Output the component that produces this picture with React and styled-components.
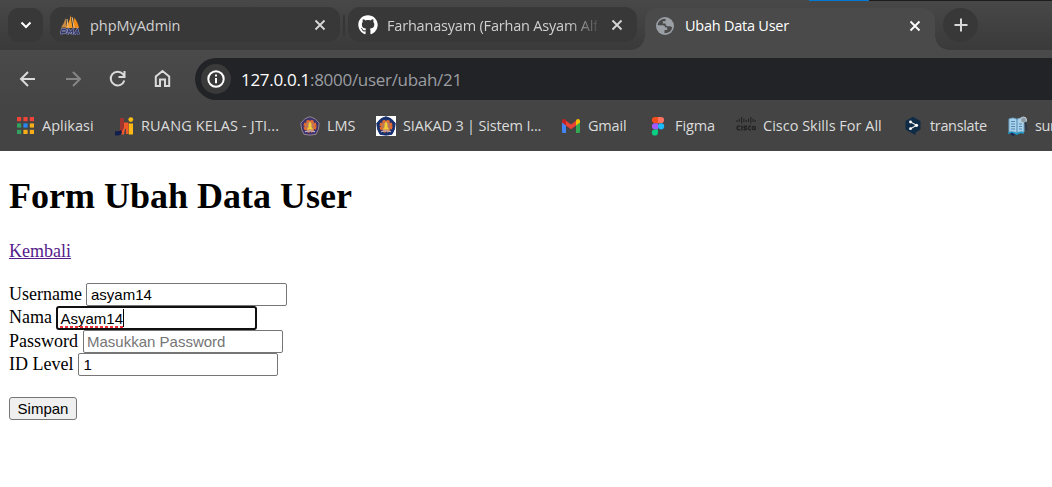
import React from "react";
import styled, { createGlobalStyle, css } from "styled-components";
import { FaGithub } from "react-icons/fa";

const Global = createGlobalStyle`
  * { box-sizing: border-box; }
  body { margin: 0; background: #fff; overflow: hidden; }
`;

const Window = styled.div`
  width: 1052px;
  height: 487px;
  overflow: hidden;
  background: #fff;
  font-family: "Open Sans", "Noto Sans", sans-serif;
`;

const TabStrip = styled.div`
  position: relative;
  display: flex;
  align-items: flex-start;
  height: 50px;
  padding: 8px 0 0 8px;
  background: linear-gradient(#484848, #3a3a3a);
`;

const Taskbar = styled.div`
  position: absolute;
  top: 0;
  right: 0;
  width: 243px;
  height: 1px;
  background: linear-gradient(90deg, #0078d4 60px, #1d1d1d 60px);
`;

const StripButton = styled.div`
  display: flex;
  align-items: center;
  justify-content: center;
  flex: none;
  width: 35px;
  height: 34px;
  border-radius: ${(p) => (p.$round ? "50%" : "11px")};
  background: #383838;
  margin-left: ${(p) => (p.$round ? "8px" : "0")};
`;

const Tab = styled.div`
  position: relative;
  display: flex;
  align-items: center;
  flex: none;
  width: ${(p) => p.$width ?? 290}px;
  height: 35px;
  margin: -1px 0 0 ${(p) => p.$gap}px;
  padding: 1px 14px 0 10px;
  border-radius: 12px;
  background: #383838;
  color: #d0d0d0;
  ${(p) =>
    p.$active &&
    css`
      height: 42px;
      margin-top: 0;
      padding-bottom: 8px;
      border-radius: 12px 12px 0 0;
      background: #4a4a4a;
      color: #fff;
      &::before,
      &::after {
        content: "";
        position: absolute;
        bottom: 0;
        width: 14px;
        height: 14px;
      }
      &::before {
        left: -14px;
        background: radial-gradient(circle at 0 0, transparent 13.5px, #4a4a4a 14px);
      }
      &::after {
        right: -14px;
        background: radial-gradient(circle at 100% 0, transparent 13.5px, #4a4a4a 14px);
      }
    `}
`;

const TabTitle = styled.span`
  flex: 1;
  margin-left: ${(p) => p.$left ?? 10}px;
  overflow: hidden;
  white-space: nowrap;
  font-size: 14.5px;
  line-height: 24px;
  padding-top: 1px;
  letter-spacing: ${(p) => p.$track ?? 0}px;
  ${(p) => p.$fade && "mask-image: linear-gradient(90deg, #000 180px, transparent 216px);"}
`;

const TabClose = styled.svg`
  flex: none;
  width: 12px;
  height: 12px;
  margin-left: 14px;
`;

const Divider = styled.div`
  flex: none;
  width: 2px;
  height: 21px;
  margin: 7px 0 0 3px;
  border-radius: 1px;
  background: #353535;
`;

const Toolbar = styled.div`
  display: flex;
  align-items: center;
  height: 58px;
  padding-left: 16px;
  background: linear-gradient(#4a4a4a, #444);
`;

const NavIcon = styled.svg`
  flex: none;
  width: 24px;
  height: 24px;
  margin-right: 21px;
  fill: none;
  stroke: ${(p) => (p.$dim ? "#858585" : "#dadada")};
  stroke-width: 2;
`;

const AddressBar = styled.div`
  display: flex;
  align-items: center;
  flex: 1;
  height: 42px;
  margin-left: -1px;
  padding-left: 6px;
  border-radius: 21px 0 0 21px;
  background: #222327;
  color: #9b9da1;
  font-size: 17px;
  letter-spacing: -0.3px;
  b { color: #fff; font-weight: 400; }
`;

const InfoBadge = styled.div`
  display: flex;
  align-items: center;
  justify-content: center;
  width: 30px;
  height: 30px;
  margin-right: 10px;
  border-radius: 50%;
  background: #3a3a3b;
`;

const Bookmarks = styled.div`
  display: flex;
  height: 43px;
  padding-left: 15px;
  background: #444;
  overflow: hidden;
`;

const Bookmark = styled.div`
  display: flex;
  align-items: center;
  flex: none;
  width: ${(p) => p.$width}px;
  height: 36px;
  color: #dcdcdc;
  font-size: 14.5px;
  letter-spacing: ${(p) => p.$track}px;
  white-space: nowrap;
  svg { flex: none; width: 20px; height: 20px; margin-right: 7px; }
`;

const BookmarkLabel = styled.span`
  padding-bottom: 1px;
`;

const Page = styled.main`
  padding: 0 9px;
  color: #000;
  font: 18px/23px "Liberation Serif", serif;
`;

const Heading = styled.h1`
  margin: 0;
  padding-top: 24px;
  font-size: 36px;
  line-height: 42px;
`;

const BackLink = styled.a`
  display: block;
  width: max-content;
  margin-top: 23px;
  color: #551a8b;
  text-decoration: underline;
`;

const Form = styled.form`
  margin-top: 20px;
`;

const Row = styled.label`
  display: flex;
  height: ${(p) => p.$height ?? 23}px;
  gap: ${(p) => p.$gap ?? 4}px;
`;

const field = css`
  width: 201px;
  height: 23px;
  margin: 0;
  padding: 0 4px;
  border: 1px solid #767676;
  border-radius: 2px;
  background: #fff;
  color: #000;
  font: 15px/21px "Liberation Sans", sans-serif;
`;

const Input = styled.input`
  ${field}
  width: ${(p) => p.$width ?? 201}px;
  padding: 0 ${(p) => p.$inset ?? 4}px;
  &::placeholder { color: #757575; opacity: 1; }
`;

const FocusedField = styled.div`
  ${field}
  height: 24px;
  padding: 1px 3px 0 2.5px;
  border: 2px solid #101010;
  border-radius: 3px;
`;

const Misspelled = styled.span`
  position: relative;
  display: block;
  width: max-content;
  height: 18px;
  line-height: 19px;
  border-right: 1px solid #000;
  &::after {
    content: "";
    position: absolute;
    left: 0;
    right: 0;
    bottom: -1px;
    height: 2px;
    background: repeating-linear-gradient(90deg, #f0303c 0 3px, transparent 3px 5px);
  }
`;

const Submit = styled.button`
  display: block;
  width: 68px;
  height: 23px;
  margin-top: 21px;
  padding: 0;
  border: 1px solid #767676;
  border-radius: 3px;
  background: #efefef;
  color: #000;
  font: 15px/21px "Liberation Sans", sans-serif;
`;

const CloseIcon = ({ color = "#d8d8d8" }) => (
  <TabClose viewBox="0 0 12 12">
    <path d="M1.5 1.5l9 9M10.5 1.5l-9 9" stroke={color} strokeWidth="1.8" />
  </TabClose>
);

const GlobeIcon = () => (
  <svg width="20" height="20" viewBox="0 0 20 20">
    <circle cx="10" cy="10" r="9" fill="#9aa0a6" />
    <path d="M10.5 2.7C6 2.5 2.8 5.6 2.7 9.2H8Q10.2 9.4 10.3 11.5H12.2V14H9.5V17.2Q16 17.3 17.2 11.5L15.5 10.2H12Q10.6 10 10.5 7.6H7.8V5.2H10.5Z" fill="#4a4a4a" />
  </svg>
);

const PmaIcon = () => (
  <svg width="20" height="20" viewBox="0 0 20 20">
    <path d="M5.5 3L7 12.5H1Q4.5 8 5.5 3Z" fill="#c98a46" />
    <path d="M10.5 0L12.5 13H5.5Q9.5 8 10.5 0Z" fill="#f59a24" />
    <path d="M14 2.5Q18 7 19 13H13Z" fill="#f08a16" />
    <path d="M7 4l1 8M12 2l2 10" stroke="#f3c583" />
    <path d="M1.3 19.5L2 14.6H5Q6.5 14.6 6.1 16.2T4.5 17.5H2M7.6 19.5L8.6 14.6L10.3 17.5L13 14.6L12.5 19.5M14.3 19.5L17.3 14.6L18.7 19.5M15.3 18H18.2" fill="none" stroke="#aaaed8" strokeWidth="2.2" />
    <path d="M1.3 19.5L2 14.6H5Q6.5 14.6 6.1 16.2T4.5 17.5H2M7.6 19.5L8.6 14.6L10.3 17.5L13 14.6L12.5 19.5M14.3 19.5L17.3 14.6L18.7 19.5M15.3 18H18.2" fill="none" stroke="#34376a" strokeWidth="1.3" />
  </svg>
);

const APP_COLORS = ["#ef4438", "#ef4438", "#ef4438", "#34a160", "#2a86f0", "#f5ad18", "#34a160", "#f5ad18", "#f5ad18"];

const AppsIcon = () => (
  <svg viewBox="0 0 20 20">
    {APP_COLORS.map((c, i) => (
      <rect key={i} x={2 + (i % 3) * 6.4} y={1 + Math.floor(i / 3) * 6.4} width="4.2" height="4.2" fill={c} />
    ))}
  </svg>
);

const JtiIcon = () => (
  <svg viewBox="0 0 20 20">
    <path d="M6 2H10V14Q10 18 6 18H5V14H6Z" fill="#9e3430" />
    <path d="M1 15Q4 16 7 14L8 17Q6 20 3 19.5H1Z" fill="#12204c" />
    <path d="M10 6.5H14.5V18H12V12.5Q10.5 13 10 18.5H7.5Q8.3 14 10 11.5Z" fill="#f05a28" />
    <circle cx="16.8" cy="3.6" r="2.4" fill="#fdbe10" />
    <path d="M14.8 7.5H19V18.5H14.8Z" fill="#fdb813" />
  </svg>
);

const CampusIcon = ({ boxed }) => (
  <svg viewBox="0 0 20 20">
    {boxed && <rect width="20" height="20" fill="#fff" />}
    <path
      d="M10 .7Q15.5 1.5 19.2 7.2Q19.3 13.5 16 18.3Q10 20 4 18.3Q.7 13.5 .8 7.2Q4.5 1.5 10 .7Z"
      fill={boxed ? "#18316f" : "#39336f"}
      stroke={boxed ? "#18316f" : "#a18f91"}
      strokeWidth=".9"
    />
    <circle cx="10" cy="10.2" r="5.4" fill="#b9775c" />
    <circle cx="10" cy="10.2" r="5.4" fill="none" stroke="#e86a2c" strokeWidth="2.4" strokeDasharray="3 1.24" />
    <path d="M10 5.2L11.5 8V11L13.3 13.6H6.7L8.5 11V8Z" fill="#f2cd36" />
    <path d="M5 15.8Q10 13.8 15 15.8" stroke="#b9b4c8" strokeWidth="1.2" fill="none" />
  </svg>
);

const BoxedCampusIcon = () => <CampusIcon boxed />;

const GmailIcon = () => (
  <svg viewBox="0 0 20 20">
    <path d="M1 6L5 9V17H2.3Q1 17 1 15.8Z" fill="#4285f4" />
    <path d="M19 6L15 9V17H17.7Q19 17 19 15.8Z" fill="#34a853" />
    <path d="M5 4.8L10 8.6L15 4.8V9.5L10 13.3L5 9.5Z" fill="#ea4335" />
    <path d="M1 5Q1 3 3 3Q4 3 5 4.2V9.5L1 6.5Z" fill="#c5221f" />
    <path d="M19 5Q19 3 17 3Q16 3 15 4.2V9.5L19 6.5Z" fill="#fbbc04" />
  </svg>
);

const FigmaIcon = () => (
  <svg viewBox="0 0 20 20">
    <path d="M10 1H7a3.1 3.1 0 0 0 0 6.2h3Z" fill="#f24e1e" />
    <path d="M10 1h3a3.1 3.1 0 0 1 0 6.2h-3Z" fill="#ff7262" />
    <path d="M10 7.2H7a3.1 3.1 0 0 0 0 6.2h3Z" fill="#a259ff" />
    <circle cx="13.1" cy="10.3" r="3.1" fill="#1abcfe" />
    <path d="M7 13.4h3v3.1a3.1 3.1 0 1 1-3-3.1Z" fill="#0acf83" />
  </svg>
);

const CiscoIcon = () => (
  <svg viewBox="0 0 20 20" fill="none" stroke="#242424" strokeWidth="1.1">
    <path d="M1 4v2M3.3 2.7V6M5.6 1V7.5M7.9 2.7V6M10.2 4v2M12.5 2.7V6M14.8 1V7.5M17.1 2.7V6M19.2 4v2" />
    <path strokeWidth="1.5" d="M4.2 10.3H2.5Q1 10.3 1 12T2.5 13.8H4.2M6 9.5V14.5M11 10.3H8.6Q7.7 11.2 8.6 11.9H10Q11 12.9 10 13.8H7.7M15 10.3H13.7Q12.5 10.3 12.5 12T13.7 13.8H15" />
    <circle cx="17.8" cy="12" r="1.6" strokeWidth="1.5" />
  </svg>
);

const TranslateIcon = () => (
  <svg viewBox="0 0 20 20">
    <path d="M10 .8L17.5 5V13.6L12.5 16.5V19L10 17.8L2.5 13.6V5Z" fill="#0f2b46" />
    <path d="M7.5 6L13.5 9.3L7.5 12.7" fill="none" stroke="#dfe5ea" strokeWidth="1.2" />
    <circle cx="7.5" cy="6" r="1.4" fill="#fff" />
    <circle cx="13.5" cy="9.3" r="1.6" fill="#fff" />
    <circle cx="7.5" cy="12.7" r="1.4" fill="#fff" />
  </svg>
);

const BookIcon = () => (
  <svg viewBox="0 0 20 20">
    <path d="M1 3Q5 .8 9 3.3Q12 1 16 3V16Q12 15 9 17Q5 15 1 16Z" fill="#a9d2ee" stroke="#6fa3c4" />
    <path d="M9 3V17M3 5.5h4M3 8h4M3 10.5h4M3 13h4M11 8h3M11 10.5h3M11 13h3" stroke="#5388ab" />
    <path d="M0 17Q5 15.5 9 18Q12 15.5 16 17" stroke="#19a2d4" strokeWidth="1.6" fill="none" />
    <circle cx="15.5" cy="4" r="3" fill="#8a9ca8" stroke="#c5d0d6" />
    <path d="M17 6L19 14" stroke="#2a3550" strokeWidth="1.6" />
    <path d="M3 17l3 2.5" stroke="#17255a" strokeWidth="2" />
  </svg>
);

const BOOKMARKS = [
  { label: "Aplikasi", Icon: AppsIcon, width: 99, track: 0 },
  { label: "RUANG KELAS - JTI...", Icon: JtiIcon, width: 186, track: 0.15 },
  { label: "LMS", Icon: CampusIcon, width: 76, track: 0 },
  { label: "SIAKAD 3 | Sistem I...", Icon: BoxedCampusIcon, width: 185, track: -0.16 },
  { label: "Gmail", Icon: GmailIcon, width: 87, track: -0.2 },
  { label: "Figma", Icon: FigmaIcon, width: 88, track: -0.1 },
  { label: "Cisco Skills For All", Icon: CiscoIcon, width: 167, track: 0 },
  { label: "translate", Icon: TranslateIcon, width: 105, track: -0.35 },
  { label: "surat", Icon: BookIcon, width: 80, track: -0.35 },
];

export default function App() {
  return (
    <Window>
      <Global />
      <TabStrip>
        <Taskbar />
        <StripButton>
          <svg width="12" height="8" viewBox="0 0 12 8">
            <path d="M1.5 1.5L6 6L10.5 1.5" fill="none" stroke="#fff" strokeWidth="2" />
          </svg>
        </StripButton>
        <Tab $gap={7}>
          <PmaIcon />
          <TabTitle $track={-0.05}>phpMyAdmin</TabTitle>
          <CloseIcon />
        </Tab>
        <Divider />
        <Tab $gap={3} $width={289}>
          <FaGithub size={20} color="#fff" />
          <TabTitle $left={9} $track={-0.19} $fade>Farhanasyam (Farhan Asyam Alfarizi)</TabTitle>
          <CloseIcon />
        </Tab>
        <Tab $active $gap={8}>
          <GlobeIcon />
          <TabTitle $left={10} $track={-0.24}>Ubah Data User</TabTitle>
          <CloseIcon color="#fff" />
        </Tab>
        <StripButton $round>
          <svg width="14" height="14" viewBox="0 0 14 14">
            <path d="M7 .5V13.5M.5 7H13.5" stroke="#d8d8d8" strokeWidth="2" />
          </svg>
        </StripButton>
      </TabStrip>
      <Toolbar>
        <NavIcon viewBox="0 0 24 24"><path d="M19 12H5.5M12 5L5 12L12 19" /></NavIcon>
        <NavIcon viewBox="0 0 24 24" $dim><path d="M5 12H18.5M12 5L19 12L12 19" /></NavIcon>
        <NavIcon viewBox="0 0 24 24"><path d="M18.3 13.5A6.9 6.9 0 1 1 17 7.2L18.3 9M18.5 4V10H12.5" /></NavIcon>
        <NavIcon viewBox="0 0 24 24"><path d="M4.8 19V9.4L11.5 4L18.2 9.4V19H14V12.5H9V19Z" /></NavIcon>
        <AddressBar>
          <InfoBadge>
            <svg width="18" height="18" viewBox="0 0 18 18">
              <circle cx="9" cy="9" r="7.7" fill="none" stroke="#fff" strokeWidth="2" />
              <path d="M9 8V13.3M9 4.6V6.6" stroke="#fff" strokeWidth="2" />
            </svg>
          </InfoBadge>
          <b>127.0.0.1</b>:8000/user/ubah/21
        </AddressBar>
      </Toolbar>
      <Bookmarks>
        {BOOKMARKS.map(({ label, Icon, width, track }) => (
          <Bookmark key={label} $width={width} $track={track}>
            <Icon />
            <BookmarkLabel>{label}</BookmarkLabel>
          </Bookmark>
        ))}
      </Bookmarks>
      <Page>
        <Heading>Form Ubah Data User</Heading>
        <BackLink href="#">Kembali</BackLink>
        <Form>
          <Row>Username<Input defaultValue="asyam14" /></Row>
          <Row $height={24}>Nama<FocusedField><Misspelled>Asyam14</Misspelled></FocusedField></Row>
          <Row $gap={5}>Password<Input $width={200} $inset={3} placeholder="Masukkan Password" /></Row>
          <Row $gap={5}>ID Level<Input $width={200} defaultValue="1" /></Row>
          <Submit type="button">Simpan</Submit>
        </Form>
      </Page>
    </Window>
  );
}
